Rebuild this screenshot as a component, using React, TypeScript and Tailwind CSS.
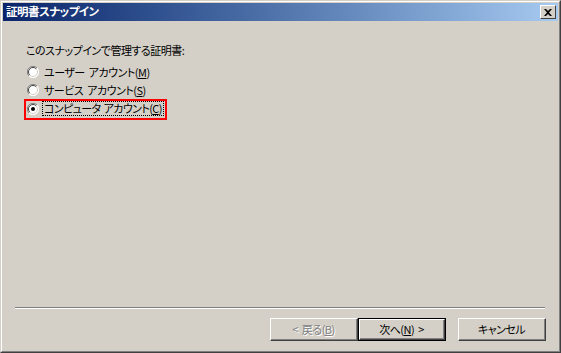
import React from 'react';

const font = "[font-family:'Noto_Sans_CJK_JP','Noto_Sans',sans-serif] [font-feature-settings:'palt'] tracking-[-0.5px]";

function Radio({ checked }: { checked?: boolean }) {
  return (
    <svg width="12" height="12" viewBox="0 0 12 12" className="shrink-0">
      <circle cx="6" cy="6" r="5.5" fill="#ffffff" />
      <path d="M10 2 A5.5 5.5 0 0 0 2 10" fill="none" stroke="#808080" strokeWidth="1" />
      <path d="M9.2 2.8 A4.5 4.5 0 0 0 2.8 9.2" fill="none" stroke="#404040" strokeWidth="1" />
      <path d="M2 10 A5.5 5.5 0 0 0 10 2" fill="none" stroke="#ffffff" strokeWidth="1" />
      <path d="M2.8 9.2 A4.5 4.5 0 0 0 9.2 2.8" fill="none" stroke="#d4d0c8" strokeWidth="1" />
      {checked && <circle cx="6" cy="6" r="2" fill="#000000" />}
    </svg>
  );
}

function Button({ children, disabled, primary }: { children: React.ReactNode; disabled?: boolean; primary?: boolean }) {
  const face = (
    <div className="flex h-full w-full items-center justify-center border-t border-l border-t-white border-l-white border-b border-r border-b-[#404040] border-r-[#404040]">
      <div className="flex h-full w-full items-center justify-center border-b border-r border-b-[#808080] border-r-[#808080]">
        {children}
      </div>
    </div>
  );
  return (
    <div
      className={
        'h-[23px] w-[88px] text-[11px] ' +
        (disabled ? 'text-[#808080] [text-shadow:1px_1px_0_#ffffff] ' : 'text-black ') +
        (primary ? 'border border-black' : '')
      }
    >
      {face}
    </div>
  );
}

export default function App() {
  return (
    <div className={'h-[353px] w-[561px] bg-[#d4d0c8] ' + font}>
      <div className="h-full w-full border-t border-l border-t-[#d4d0c8] border-l-[#d4d0c8] border-b border-r border-b-[#404040] border-r-[#404040]">
        <div className="flex h-full w-full flex-col border-t border-l border-t-white border-l-white border-b border-r border-b-[#808080] border-r-[#808080] p-px">
          {/* Title bar */}
          <div className="flex h-[18px] shrink-0 items-center justify-between bg-gradient-to-r from-[#0a246a] to-[#a6caf0] pl-[3px] pr-[2px]">
            <span className="text-[11.5px] font-bold leading-none text-white">証明書スナップイン</span>
            <div className="flex h-[14px] w-[16px] items-center justify-center border-t border-l border-t-white border-l-white border-b border-r border-b-[#404040] border-r-[#404040] bg-[#d4d0c8]">
              <svg width="8" height="7" viewBox="0 0 8 7">
                <path d="M0 0 L2 0 L4 2 L6 0 L8 0 L5 3.5 L8 7 L6 7 L4 5 L2 7 L0 7 L3 3.5 Z" fill="#000" />
              </svg>
            </div>
          </div>

          {/* Body */}
          <div className="flex flex-1 flex-col">
            <div className="pl-[23px] pt-[21px] text-[11px] text-black">
              <div className="flex h-4 items-center">このスナップインで管理する証明書:</div>
              <div className="mt-[5px] flex flex-col">
                <div className="flex h-[18px] items-center gap-[5px] pl-px">
                  <Radio />
                  <span>
                    ユーザー<span className="ml-[4px]">アカウント(<span className="underline">M</span>)</span>
                  </span>
                </div>
                <div className="flex h-[18px] items-center gap-[5px] pl-px">
                  <Radio />
                  <span>
                    サービス<span className="ml-[4px]">アカウント(<span className="underline">S</span>)</span>
                  </span>
                </div>
                <div className="relative flex h-[19px] items-center gap-[3px] pl-px">
                  <Radio checked />
                  <span className="border border-dotted border-black px-px leading-[13px] tracking-[-0.6px]">
                    コンピュータ<span className="ml-[3px]">アカウント(<span className="underline">C</span>)</span>
                  </span>
                  <div className="absolute -left-[2px] top-0 h-[21px] w-[143px] border-2 border-[#ff0000]" />
                </div>
              </div>
            </div>

            <div className="flex-1" />

            {/* Separator */}
            <div className="ml-[12px] mr-[13px] border-t border-t-[#808080] border-b border-b-white" />

            {/* Buttons */}
            <div className="mb-[9px] mt-[9px] flex justify-end pr-[12px]">
              <Button disabled>
                &lt;<span className="ml-[4px]">戻る(<span className="underline">B</span>)</span>
              </Button>
              <Button primary>
                次へ(<span className="underline">N</span>)<span className="ml-[4px]">&gt;</span>
              </Button>
              <div className="ml-[12px]">
                <Button>キャンセル</Button>
              </div>
            </div>
          </div>
        </div>
      </div>
    </div>
  );
}
